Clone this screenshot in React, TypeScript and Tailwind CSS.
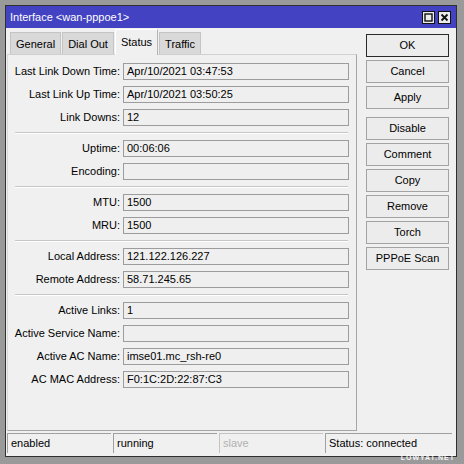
import React from "react";

type Row = { label: string; value: string };

const groups: Row[][] = [
  [
    { label: "Last Link Down Time:", value: "Apr/10/2021 03:47:53" },
    { label: "Last Link Up Time:", value: "Apr/10/2021 03:50:25" },
    { label: "Link Downs:", value: "12" },
  ],
  [
    { label: "Uptime:", value: "00:06:06" },
    { label: "Encoding:", value: "" },
  ],
  [
    { label: "MTU:", value: "1500" },
    { label: "MRU:", value: "1500" },
  ],
  [
    { label: "Local Address:", value: "121.122.126.227" },
    { label: "Remote Address:", value: "58.71.245.65" },
  ],
  [
    { label: "Active Links:", value: "1" },
    { label: "Active Service Name:", value: "" },
    { label: "Active AC Name:", value: "imse01.mc_rsh-re0" },
    { label: "AC MAC Address:", value: "F0:1C:2D:22:87:C3" },
  ],
];

const tabs = ["General", "Dial Out", "Status", "Traffic"];

function Field({ label, value }: Row) {
  return (
    <div className="flex h-[17px] items-center">
      <div className="w-[112px] whitespace-nowrap text-right">{label}</div>
      <div className="ml-[3px] flex h-[17px] w-[226px] items-center border border-[#9c9c9c] bg-[#efefef] pl-[3px] leading-none">
        {value}
      </div>
    </div>
  );
}

function Btn({ children, primary }: { children: React.ReactNode; primary?: boolean }) {
  return (
    <div
      className={
        "flex h-[23px] items-center justify-center border bg-[#ececec] " +
        (primary ? "border-[#2a2a2a]" : "border-[#a3a3a3]")
      }
    >
      {children}
    </div>
  );
}

export default function App() {
  return (
    <div
      className="relative h-[464px] w-[464px] overflow-hidden bg-[#9a9a9a] pl-[5px] pt-[5px] text-[11px] text-black"
      style={{ fontFamily: '"Liberation Sans", Arial, sans-serif' }}
    >
      <div className="flex h-[452px] w-[452px] flex-col border border-[#303030] bg-[#f0f0f0]">
        {/* title bar */}
        <div className="flex h-[22px] items-center bg-[#4242c2] pl-[4px] pr-[5px] text-white">
          <span>Interface &lt;wan-pppoe1&gt;</span>
          <div className="ml-auto flex gap-[3px]">
            <svg width="13" height="13" viewBox="0 0 13 13">
              <rect x="0.5" y="0.5" width="12" height="12" fill="#ececec" stroke="#111" />
              <rect x="3" y="3" width="7" height="7" fill="none" stroke="#111" strokeWidth="1.4" />
            </svg>
            <svg width="13" height="13" viewBox="0 0 13 13">
              <rect x="0.5" y="0.5" width="12" height="12" fill="#ececec" stroke="#111" />
              <path d="M3.5 3.5 L9.5 9.5 M9.5 3.5 L3.5 9.5" stroke="#111" strokeWidth="1.8" />
            </svg>
          </div>
        </div>

        <div className="flex">
          {/* left: tabs + panel */}
          <div className="ml-[1px] flex w-[350px] flex-col">
            <div className="mt-[2px] flex h-[24px] items-end gap-[1px] pl-[3px]">
              {tabs.map((t) =>
                t === "Status" ? (
                  <div
                    key={t}
                    className="relative z-10 -mb-[1px] flex h-[26px] items-center border border-b-0 border-[#b4b4b4] border-t-white border-l-white bg-[#f0f0f0] px-[5px] pb-[1px]"
                  >
                    {t}
                  </div>
                ) : (
                  <div
                    key={t}
                    className="flex h-[22px] items-center border border-b-0 border-[#c4c4c4] bg-[#d9d9d9] px-[5px] pt-[1px]"
                  >
                    {t}
                  </div>
                )
              )}
            </div>
            <div className="flex h-[377px] flex-col gap-[6px] border border-[#a6a6a6] border-l-[#d8d8d8] border-t-[#d0d0d0] pt-[8px]">
              {groups.map((g, gi) => (
                <React.Fragment key={gi}>
                  {gi > 0 && (
                    <div className="ml-[7px] h-[2px] w-[333px] border-t border-[#c6c6c6] bg-white" />
                  )}
                  {g.map((r) => (
                    <Field key={r.label} {...r} />
                  ))}
                </React.Fragment>
              ))}
            </div>
          </div>

          {/* right: buttons */}
          <div className="ml-[9px] mt-[6px] flex w-[83px] flex-col gap-[3px]">
            <Btn primary>OK</Btn>
            <Btn>Cancel</Btn>
            <Btn>Apply</Btn>
            <div className="h-[2px]" />
            <Btn>Disable</Btn>
            <Btn>Comment</Btn>
            <Btn>Copy</Btn>
            <Btn>Remove</Btn>
            <Btn>Torch</Btn>
            <Btn>PPPoE Scan</Btn>
          </div>
        </div>

        {/* status bar */}
        <div className="mt-[2px] flex h-[20px] gap-[2px] pl-[1px]">
          <div className="flex w-[104px] items-center border-l border-t border-[#a0a0a0] pl-[3px]">enabled</div>
          <div className="flex w-[104px] items-center border-l border-t border-[#a0a0a0] pl-[3px]">running</div>
          <div className="flex w-[104px] items-center border-l border-t border-[#c4c4c4] pl-[3px] text-[#b0b0b0]">slave</div>
          <div className="flex w-[127px] items-center border-l border-t border-[#a0a0a0] pl-[3px]">Status: connected</div>
        </div>
      </div>
      <div className="absolute bottom-[1px] right-[9px] text-[7px] font-bold tracking-[1px] text-white/90">
        LOWYAT.NET
      </div>
    </div>
  );
}
